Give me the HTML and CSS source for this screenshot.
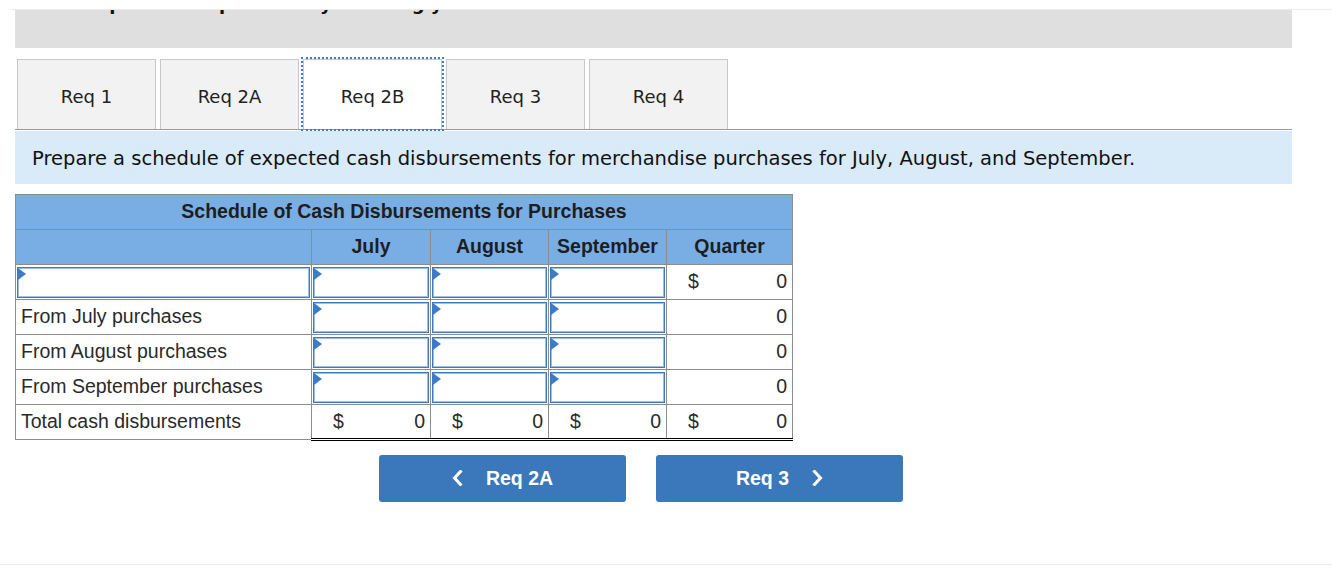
FILE: index.html
```html
<!DOCTYPE html>
<html lang="en">
<head>
<meta charset="utf-8">
<title>Schedule of Cash Disbursements</title>
<link rel="stylesheet" href="styles.css">
</head>
<body>
<div class="topline"></div>
<main class="page">
  <div class="banner"><p class="banner-text">Complete this question by entering your answers in the tabs below.</p></div>

  <nav class="tabs">
    <div class="tab">Req 1</div>
    <div class="tab">Req 2A</div>
    <div class="tab active">Req 2B</div>
    <div class="tab">Req 3</div>
    <div class="tab">Req 4</div>
  </nav>

  <div class="band">Prepare a schedule of expected cash disbursements for merchandise purchases for July, August, and September.</div>

  <table class="sched">
    <colgroup>
      <col class="c-label"><col class="c-m1"><col class="c-m2"><col class="c-m3"><col class="c-q">
    </colgroup>
    <tr class="title-row"><th colspan="5">Schedule of Cash Disbursements for Purchases</th></tr>
    <tr class="head-row"><th></th><th>July</th><th>August</th><th>September</th><th>Quarter</th></tr>
    <tr>
      <td class="in"><div class="field"></div></td>
      <td class="in"><div class="field"></div></td>
      <td class="in"><div class="field"></div></td>
      <td class="in"><div class="field"></div></td>
      <td class="amt"><div class="amt-inner"><span>$</span><span>0</span></div></td>
    </tr>
    <tr>
      <td class="label">From July purchases</td>
      <td class="in"><div class="field"></div></td>
      <td class="in"><div class="field"></div></td>
      <td class="in"><div class="field"></div></td>
      <td class="amt"><div class="amt-inner"><span></span><span>0</span></div></td>
    </tr>
    <tr>
      <td class="label">From August purchases</td>
      <td class="in"><div class="field"></div></td>
      <td class="in"><div class="field"></div></td>
      <td class="in"><div class="field"></div></td>
      <td class="amt"><div class="amt-inner"><span></span><span>0</span></div></td>
    </tr>
    <tr>
      <td class="label">From September purchases</td>
      <td class="in"><div class="field"></div></td>
      <td class="in"><div class="field"></div></td>
      <td class="in"><div class="field"></div></td>
      <td class="amt"><div class="amt-inner"><span></span><span>0</span></div></td>
    </tr>
    <tr class="total">
      <td class="label">Total cash disbursements</td>
      <td class="amt tot"><div class="amt-inner"><span>$</span><span>0</span></div></td>
      <td class="amt tot"><div class="amt-inner"><span>$</span><span>0</span></div></td>
      <td class="amt tot"><div class="amt-inner"><span>$</span><span>0</span></div></td>
      <td class="amt tot"><div class="amt-inner"><span>$</span><span>0</span></div></td>
    </tr>
  </table>

  <div class="nav-buttons">
    <button class="btn" type="button">
      <svg class="chev" width="11" height="16" viewBox="0 0 11 16"><polyline points="8.5,1.5 2.5,8 8.5,14.5" fill="none" stroke="#fff" stroke-width="3" stroke-linecap="square"/></svg>
      <span>Req 2A</span>
    </button>
    <button class="btn" type="button">
      <span>Req 3</span>
      <svg class="chev" width="11" height="16" viewBox="0 0 11 16"><polyline points="2.5,1.5 8.5,8 2.5,14.5" fill="none" stroke="#fff" stroke-width="3" stroke-linecap="square"/></svg>
    </button>
  </div>
</main>
<div class="bottomline"></div>
</body>
</html>
```
FILE: styles.css
```css
* { box-sizing: border-box; }

body {
  margin: 0;
  background: #fff;
  color: #222;
  font-family: "DejaVu Sans", Verdana, sans-serif;
}

.topline {
  margin: 9px 0 0 10px;
  border-top: 1px solid #ececec;
}

.page {
  margin-left: 15px;
  width: 1277px;
}

.banner {
  height: 38px;
  background: #dfdfdf;
  overflow: hidden;
}

.banner-text {
  margin: -16px 0 0 0;
  padding-left: 50px;
  font-size: 18px;
  line-height: 20px;
  font-weight: bold;
  color: #111;
  white-space: nowrap;
}

.tabs {
  display: flex;
  gap: 4px;
  margin-top: 11px;
  padding-left: 2px;
  border-bottom: 1px solid #9a9a9a;
}

.tab {
  width: 139px;
  height: 70px;
  display: flex;
  align-items: center;
  justify-content: center;
  padding-top: 3px;
  background: #f2f2f2;
  border: 1px solid #c8c8c8;
  border-bottom: none;
  font-size: 18px;
  color: #222;
}

.tab.active {
  background: #fff;
  outline: 2px dotted #3d7cc9;
  outline-offset: 0;
}

.band {
  margin-top: 1px;
  height: 53px;
  background: #d9eaf8;
  display: flex;
  align-items: center;
  padding-left: 17px;
  padding-top: 2px;
  font-size: 19.5px;
  color: #111;
}

.sched {
  margin-top: 10px;
  width: 777px;
  border-collapse: collapse;
  table-layout: fixed;
  font-family: "Liberation Sans", Arial, sans-serif;
  font-size: 19.5px;
  color: #222;
}

.c-label { width: 296px; }
.c-m1 { width: 119px; }
.c-m2 { width: 118px; }
.c-m3 { width: 118px; }
.c-q { width: 126px; }

.sched th,
.sched td {
  border: 1px solid #8c8c8c;
  height: 35px;
  padding: 0;
}

.title-row th,
.head-row th {
  background: #79aee4;
  font-weight: bold;
  text-align: center;
  color: #1e1e1e;
  padding-bottom: 2px;
}

.label {
  padding: 0 5px 1px !important;
  text-align: left;
  color: #2a2a2a;
}

.in {
  padding: 1px !important;
}

.field {
  position: relative;
  height: 31px;
  border: 1px solid #3f78bb;
  box-shadow: inset 0 0 0 1px #9ebfe6;
  background: #fff;
}

.field::before {
  content: "";
  position: absolute;
  left: 0;
  top: 0;
  border-top: 6px solid transparent;
  border-bottom: 6px solid transparent;
  border-left: 8px solid #3b7cc8;
}

.amt-inner {
  display: flex;
  justify-content: space-between;
  padding: 0 5px 1px 21px;
  color: #2a2a2a;
}

.total .tot {
  border-top: 1px solid #000;
  border-bottom: 3px double #000;
}

.nav-buttons {
  display: flex;
  gap: 30px;
  margin-top: 14px;
  padding-left: 364px;
}

.btn {
  width: 247px;
  height: 47px;
  border: none;
  border-radius: 3px;
  background: #3a77bb;
  color: #fff;
  font-family: "Liberation Sans", Arial, sans-serif;
  font-size: 19.5px;
  font-weight: bold;
  display: flex;
  align-items: center;
  justify-content: center;
  gap: 23px;
  padding: 0 0 1px;
}

.chev { display: block; }

.bottomline {
  margin-top: 62px;
  border-top: 1px solid #ececec;
}
```
